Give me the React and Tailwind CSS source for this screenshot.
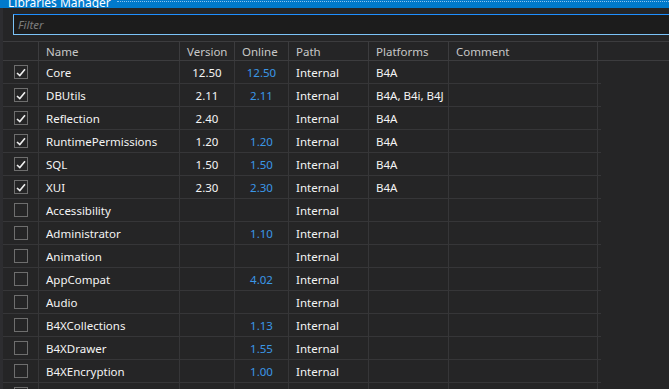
import React from 'react';

const libs = [
    { name: 'Core', checked: true, version: '12.50', online: '12.50', platforms: 'B4A' },
    { name: 'DBUtils', checked: true, version: '2.11', online: '2.11', platforms: 'B4A, B4i, B4J' },
    { name: 'Reflection', checked: true, version: '2.40', online: '', platforms: 'B4A' },
    { name: 'RuntimePermissions', checked: true, version: '1.20', online: '1.20', platforms: 'B4A' },
    { name: 'SQL', checked: true, version: '1.50', online: '1.50', platforms: 'B4A' },
    { name: 'XUI', checked: true, version: '2.30', online: '2.30', platforms: 'B4A' },
    { name: 'Accessibility', version: '', online: '' },
    { name: 'Administrator', version: '', online: '1.10' },
    { name: 'Animation', version: '', online: '' },
    { name: 'AppCompat', version: '', online: '4.02' },
    { name: 'Audio', version: '', online: '' },
    { name: 'B4XCollections', version: '', online: '1.13' },
    { name: 'B4XDrawer', version: '', online: '1.55' },
    { name: 'B4XEncryption', version: '', online: '1.00' },
    { name: 'B4XFormatter', version: '', online: '1.04' },
    { name: 'B4XPages', version: '', online: '1.10' },
];

const CheckBox = ({ checked }) => (
    <div className="w-[14px] h-[14px] border border-[#6e6e6e] flex items-center justify-center">
        {checked && (
            <svg width="10" height="9" viewBox="0 0 10 9">
                <path d="M1 5 L3.8 7.6 L9 1.2" fill="none" stroke="#f0f0f0" strokeWidth="1.6" />
            </svg>
        )}
    </div>
);

const Row = ({ lib }) => (
    <div className="flex h-[23px] text-[11.5px] text-[#f4f4f4]">
        <div className="flex w-[598px] border-b border-[#363638]">
            <div className="w-[36px] shrink-0 border-r border-[#363638] flex items-center justify-center pl-[1px]">
                <CheckBox checked={lib.checked} />
            </div>
            <div className="w-[141px] shrink-0 border-r border-[#363638] flex items-center pl-[7px] pt-[1px]">{lib.name}</div>
            <div className="w-[55px] shrink-0 border-r border-[#363638] flex items-center justify-center pt-[1px]">{lib.version}</div>
            <div className="w-[54px] shrink-0 border-r border-[#363638] flex items-center justify-center pt-[1px] text-[#3b97e6]">{lib.online}</div>
            <div className="w-[80px] shrink-0 border-r border-[#363638] flex items-center pl-[7px] pt-[1px]">Internal</div>
            <div className="w-[80px] shrink-0 border-r border-[#363638] flex items-center pl-[7px] pt-[1px] whitespace-nowrap">{lib.platforms}</div>
            <div className="w-[149px] shrink-0 border-r border-[#363638]"></div>
        </div>
    </div>
);

export default function App() {
    return (
        <div className="w-[669px] h-[389px] overflow-hidden bg-[#252526] flex flex-col" style={{ fontFamily: '"Noto Sans", "Open Sans", sans-serif' }}>
            {/* title bar, cut off at the top */}
            <div className="h-[8px] shrink-0 bg-[#007acc] overflow-hidden flex items-end">
                <span className="text-white text-[12px] leading-none pl-[8px] -mb-[1px] whitespace-nowrap">Libraries Manager</span>
                <div className="flex-1 self-start ml-[6px] mt-[1px] h-[1px] border-t border-dotted border-[#8cc4ee]"></div>
            </div>

            <div className="flex flex-1 min-h-0">
                <div className="w-[3px] shrink-0 bg-[#2d2d30]"></div>
                <div className="flex-1 flex flex-col min-w-0">
                    <div className="pt-[6px] pl-[10px] pb-[6px]">
                        <div className="h-[21px] bg-[#1c1c1c] border border-[#7cc3f7] border-t-[#1e8fff] border-r-0 flex items-center pl-[4px] pt-[1px]">
                            <span className="italic text-[11.5px] text-[#7c7c7c]">Filter</span>
                        </div>
                    </div>

                    <div className="flex h-[21px] border-y border-[#3c3c3e] text-[11.5px] text-[#c8c8c8]">
                        <div className="w-[36px] shrink-0 border-r border-[#3c3c3e]"></div>
                        <div className="w-[141px] shrink-0 border-r border-[#3c3c3e] flex items-center pl-[7px] pt-[1px]">Name</div>
                        <div className="w-[55px] shrink-0 border-r border-[#3c3c3e] flex items-center pl-[7px] pt-[1px]">Version</div>
                        <div className="w-[54px] shrink-0 border-r border-[#3c3c3e] flex items-center pl-[7px] pt-[1px]">Online</div>
                        <div className="w-[80px] shrink-0 border-r border-[#3c3c3e] flex items-center pl-[7px] pt-[1px]">Path</div>
                        <div className="w-[80px] shrink-0 border-r border-[#3c3c3e] flex items-center pl-[7px] pt-[1px]">Platforms</div>
                        <div className="w-[149px] shrink-0 border-r border-[#3c3c3e] flex items-center pl-[7px] pt-[1px]">Comment</div>
                    </div>

                    <div className="flex flex-col">
                        {libs.map((lib) => (
                            <Row key={lib.name} lib={lib} />
                        ))}
                    </div>
                </div>
            </div>
        </div>
    );
}
